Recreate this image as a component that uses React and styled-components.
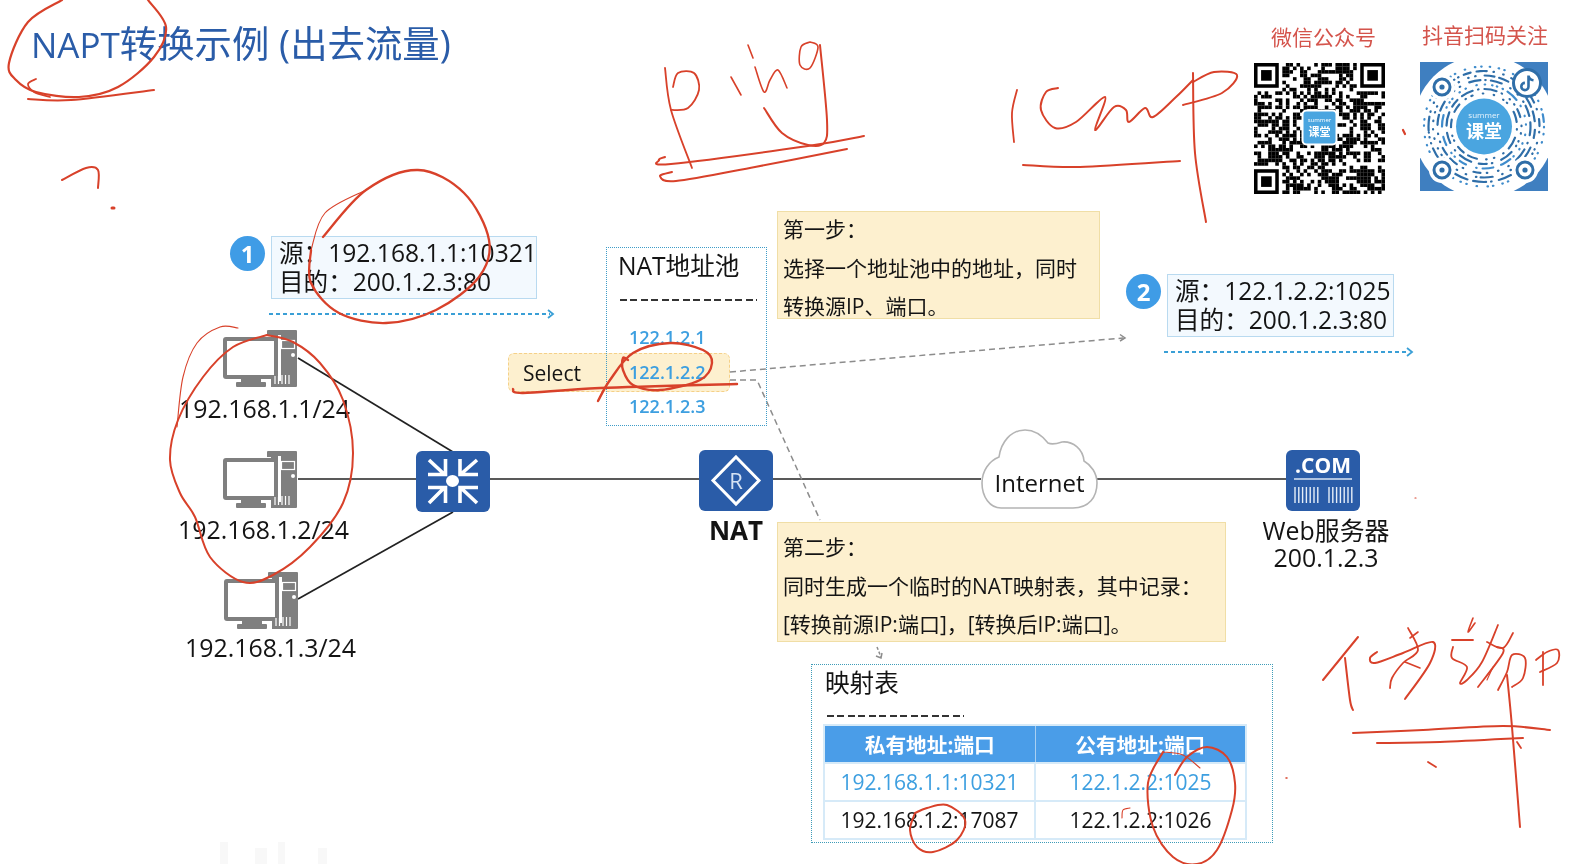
import React from 'react';
import styled, { createGlobalStyle, css } from 'styled-components';

const blue = '#2a5ca8';
const sky = '#3d9fe0';
const paper = '#fdf0cf';
const ink = '#141414';
const fontStack = '"Open Sans", "Noto Sans CJK SC", sans-serif';

const GlobalStyle = createGlobalStyle`
  html, body {
    margin: 0;
    background: #fff;
    overflow: hidden;
  }
`;

// nodes on the slide sit where the diagram puts them
const at = css`
  position: absolute;
  left: ${(p) => p.$x}px;
  top: ${(p) => p.$y}px;
`;

const Slide = styled.div`
  position: relative;
  width: 1574px;
  height: 864px;
  overflow: hidden;
  background: #fff;
  color: ${ink};
  font-family: ${fontStack};
  filter: blur(0.35px);
`;

const Title = styled.h1`
  ${at}
  margin: 0;
  font-size: 37.4px;
  font-weight: 400;
  line-height: 48px;
  color: ${blue};
  white-space: nowrap;
`;

const TitleLatin = styled.span`
  font-size: 35px;
`;

const CodeBlock = styled.figure`
  ${at}
  margin: 0;
  width: ${(p) => p.$w}px;
  display: flex;
  flex-direction: column;
  align-items: center;
  gap: ${(p) => p.$gap}px;
`;

const CodeCaption = styled.figcaption`
  padding-left: ${(p) => p.$inset}px;
  font-size: 21px;
  line-height: 28px;
  color: #d4544c;
  white-space: nowrap;
`;

const Flow = styled.div`
  ${at}
  display: flex;
  align-items: flex-start;
  gap: 6px;
`;

const Badge = styled.span`
  flex: none;
  width: 35px;
  height: 35px;
  border-radius: 50%;
  background: #3f9ce6;
  color: #fff;
  font-size: 24px;
  font-weight: 700;
  line-height: 35px;
  text-align: center;
`;

const AddressBox = styled.div`
  box-sizing: border-box;
  width: ${(p) => p.$w}px;
  height: 63px;
  padding: 1px 0 0 7px;
  background: #f3f9fe;
  border: 1px solid #b9daf0;
  font-size: 24.6px;
  line-height: 29px;
  white-space: nowrap;
`;

const Host = styled.div`
  ${at}
  display: flex;
  flex-direction: column;
  gap: ${(p) => p.$gap}px;
`;

const HostIcon = styled.svg`
  display: block;
  width: 74px;
  height: 57px;
  margin-left: ${(p) => p.$inset}px;
`;

const NodeLabel = styled.div`
  font-size: 24.9px;
  line-height: 30px;
  white-space: nowrap;
`;

const Device = styled.svg`
  ${at}
  width: 74px;
  height: 61px;
`;

const NatLabel = styled.div`
  ${at}
  width: 74px;
  font-size: 26px;
  font-weight: 700;
  line-height: 30px;
  text-align: center;
`;

const Cloud = styled.div`
  ${at}
  width: 117px;
  height: 80px;
  display: flex;
  align-items: flex-end;
  justify-content: center;
`;

const CloudShape = styled.svg`
  position: absolute;
  inset: 0;
  width: 117px;
  height: 80px;
`;

const CloudLabel = styled.span`
  position: relative;
  font-size: 24px;
  line-height: 30px;
  margin-bottom: 11px;
`;

const Server = styled.div`
  ${at}
  width: 160px;
  display: flex;
  flex-direction: column;
  align-items: center;
  font-size: 24.9px;
  line-height: 27px;
`;

const ServerIcon = styled.svg`
  display: block;
  margin: 0 0 6px -7px;
`;

const PoolBox = styled.div`
  ${at}
  box-sizing: border-box;
  width: 161px;
  height: 179px;
  padding: 3px 11px 0;
  border: 1px dotted #3f9cc8;
`;

const BoxHeading = styled.div`
  font-size: 24.6px;
  line-height: 30px;
  white-space: nowrap;
`;

const DashRule = styled.div`
  width: 137px;
  height: 2px;
  margin-top: ${(p) => p.$top}px;
  margin-left: ${(p) => p.$left}px;
  background: repeating-linear-gradient(90deg, #333 0 7px, transparent 7px 10.5px);
`;

const PoolList = styled.ul`
  list-style: none;
  margin: 24px 0 0 11px;
  padding: 0;
  display: flex;
  flex-direction: column;
  gap: 9.5px;
`;

const PoolItem = styled.li`
  font-size: 18px;
  font-weight: 600;
  line-height: 25px;
  color: ${sky};
`;

const SelectBox = styled.div`
  ${at}
  box-sizing: border-box;
  width: 222px;
  height: 39px;
  padding-left: 14px;
  background: ${paper};
  border: 1.5px dashed #f5d088;
  border-radius: 6px;
  font-size: 21px;
  line-height: 38px;
`;

const StepNote = styled.div`
  ${at}
  box-sizing: border-box;
  width: ${(p) => p.$w}px;
  height: ${(p) => p.$h}px;
  padding-left: 5px;
  background: ${paper};
  border: 1px solid #f0dea6;
  font-size: 21px;
  line-height: 38.5px;
  white-space: nowrap;
`;

const StepLines = styled.div`
  margin-top: ${(p) => p.$top}px;
`;

const MapBox = styled.div`
  ${at}
  box-sizing: border-box;
  width: 462px;
  height: 179px;
  padding: 3px 0 0 11px;
  border: 1px dotted #3f9cb8;
`;

const MapHeading = styled(BoxHeading)`
  padding-left: 2px;
`;

const MapTable = styled.table`
  border-collapse: collapse;
  table-layout: fixed;
  width: 424px;
  margin-top: 7px;
  border: 2px solid #d6eaf8;
`;

const HeadCell = styled.th`
  height: 36px;
  padding: 0;
  background: #4a9de8;
  border-right: 1px solid #a9d0f2;
  color: #fff;
  font-size: 20.7px;
  font-weight: 700;

  &:last-child {
    border-right: 0;
  }
`;

const Cell = styled.td`
  height: 36px;
  padding: 0;
  border: 2px solid #d6eaf8;
  color: ${(p) => (p.$live ? sky : ink)};
  font-size: 21px;
  text-align: center;
`;

const Overlay = styled.svg`
  position: absolute;
  inset: 0;
  width: 1574px;
  height: 864px;
  pointer-events: none;
`;

/* little seeded generator so both codes stay the same on every render */
function seeded(seed) {
  let s = seed;
  return () => {
    s = (s * 1664525 + 1013904223) % 4294967296;
    return s / 4294967296;
  };
}

const QR_SIZE = 37;

function inFinder(r, c) {
  const near = (v) => v < 8;
  const far = (v) => v >= QR_SIZE - 8;
  return (near(r) && near(c)) || (near(r) && far(c)) || (far(r) && near(c));
}

function qrModules() {
  const rnd = seeded(41);
  const cells = [];
  for (let r = 0; r < QR_SIZE; r++) {
    for (let c = 0; c < QR_SIZE; c++) {
      if (!inFinder(r, c) && rnd() > 0.47) cells.push([c, r]);
    }
  }
  return cells;
}

function Finder({ x, y }) {
  return (
    <g>
      <rect x={x + 0.5} y={y + 0.5} width="6" height="6" fill="none" stroke="#000" strokeWidth="1" />
      <rect x={x + 2} y={y + 2} width="3" height="3" fill="#000" />
    </g>
  );
}

function WechatCode() {
  return (
    <svg width="131" height="131" viewBox={`0 0 ${QR_SIZE} ${QR_SIZE}`}>
      {qrModules().map(([c, r]) => (
        <rect key={`${c}-${r}`} x={c} y={r} width="1.02" height="1.02" fill="#000" />
      ))}
      <Finder x={0} y={0} />
      <Finder x={QR_SIZE - 7} y={0} />
      <Finder x={0} y={QR_SIZE - 7} />
      <g transform="translate(18.5 18.2) scale(0.2824)">
        <rect x="-17" y="-17" width="34" height="34" rx="4" fill="#4aa5e0" stroke="#fff" strokeWidth="2" />
        <text x="0" y="-5" textAnchor="middle" fontSize="6" fill="#fff" fontFamily={fontStack}>summer</text>
        <text x="0" y="9" textAnchor="middle" fontSize="11" fontWeight="700" fill="#fff" fontFamily={fontStack}>课堂</text>
      </g>
    </svg>
  );
}

function Locator({ x, y }) {
  return (
    <g>
      <circle cx={x} cy={y} r="13" fill="#fff" />
      <circle cx={x} cy={y} r="8" fill="none" stroke="#2f6ea8" strokeWidth="3" />
      <circle cx={x} cy={y} r="2.6" fill="#2f6ea8" />
    </g>
  );
}

function DouyinCode() {
  const rnd = seeded(7);
  const rings = [33, 37.5, 42, 46.5, 51, 55.5, 60];
  return (
    <svg width="128" height="129" viewBox="0 0 128 129">
      <rect width="128" height="129" fill="#3f7fc0" />
      <circle cx="64" cy="64.5" r="71" fill="#fff" />
      {rings.map((r) => {
        const dashes = [];
        for (let i = 0; i < 26; i++) dashes.push(rnd() > 0.72 ? 7 + rnd() * 7 : 0.5, 4 + rnd() * 7);
        return (
          <circle
            key={r}
            cx="64"
            cy="64.5"
            r={r}
            fill="none"
            stroke={r % 2 ? '#2f6ea8' : '#3f8ccc'}
            strokeWidth="2.2"
            strokeLinecap="round"
            strokeDasharray={dashes.join(' ')}
            transform={`rotate(${rnd() * 360} 64 64.5)`}
          />
        );
      })}
      <circle cx="64" cy="64.5" r="28" fill="#4aa5e0" />
      <text x="64" y="56" textAnchor="middle" fontSize="8" fontWeight="500" fill="#e8f4fc" fontFamily={fontStack}>summer</text>
      <text x="64" y="76" textAnchor="middle" fontSize="18" fontWeight="700" fill="#fff" fontFamily={fontStack}>课堂</text>
      <Locator x={22} y={25} />
      <Locator x={22} y={108} />
      <Locator x={105} y={108} />
      <circle cx="107" cy="21" r="13.5" fill="#fff" stroke="#2f6ea8" strokeWidth="3" />
      <path d="M108.5 13.5v11a3.6 3.6 0 1 1-3.6-3.6M108.5 14c.6 2.6 2.4 4 5 4.3" fill="none" stroke="#2f6ea8" strokeWidth="2.6" />
    </svg>
  );
}

function Computer({ inset }) {
  return (
    <HostIcon $inset={inset} viewBox="0 0 74 57">
      <path d="M44 1a1 1 0 0 1 1-1h28a1 1 0 0 1 1 1v55a1 1 0 0 1-1 1H48V6h-4z" fill="#7f7f7f" />
      <rect x="55" y="5" width="3" height="46" fill="#fff" />
      <rect x="0" y="7" width="55" height="42" rx="3" fill="#7f7f7f" />
      <rect x="4" y="11" width="47" height="34" fill="#fff" />
      <rect x="13" y="52" width="30" height="5" rx="1" fill="#7f7f7f" />
      <rect x="18" y="49" width="20" height="3" fill="#7f7f7f" />
      <rect x="58.5" y="10.5" width="13" height="8" fill="none" stroke="#fff" strokeWidth="1.2" />
      <circle cx="70" cy="25" r="2" fill="#fff" />
      <path d="M52 46v8M55.5 46v8M59 45v9M62.5 45v9M66 45v9" stroke="#fff" strokeWidth="1.2" />
    </HostIcon>
  );
}

function SwitchDevice({ x, y }) {
  return (
    <Device $x={x} $y={y} viewBox="0 0 74 61">
      <rect width="74" height="61" rx="6" fill={blue} />
      <ellipse cx="36.5" cy="30" rx="6.5" ry="6" fill="#fff" />
      <g fill="none" stroke="#fff" strokeWidth="3.6">
        <path d="M13 9l15 14M12 23.5h17.5V8" />
        <path d="M61 9L45 23M62 23.5H44V8" />
        <path d="M13 52l15-15M12 36.5h17.5V52" />
        <path d="M61 52L45 37M62 36.5H44V52" />
      </g>
    </Device>
  );
}

function RouterDevice({ x, y }) {
  return (
    <Device $x={x} $y={y} viewBox="0 0 74 61">
      <rect width="74" height="61" rx="6" fill={blue} />
      <path d="M37 7L60 30.5 37 54 14 30.5z" fill="none" stroke="#fff" strokeWidth="3" />
      <text x="37" y="38.5" textAnchor="middle" fontSize="22" fill="#d5e2f3" fontFamily={fontStack}>R</text>
    </Device>
  );
}

function ComDevice() {
  const bars = [];
  for (let i = 0; i < 7; i++) bars.push(9 + i * 3.8, 43 + i * 3.8);
  return (
    <ServerIcon width="74" height="61" viewBox="0 0 74 61">
      <rect width="74" height="61" rx="6" fill={blue} />
      <text x="37" y="23" textAnchor="middle" fontSize="21" fontWeight="700" fill="#fff" fontFamily={fontStack}>.COM</text>
      <path d="M8 29h58" stroke="#dbe6f5" strokeWidth="1.4" />
      {bars.map((b) => (
        <path key={b} d={`M${b} 37v16`} stroke="#e6eef8" strokeWidth="1.4" />
      ))}
    </ServerIcon>
  );
}

function Wires() {
  return (
    <Overlay viewBox="0 0 1574 864">
      <g stroke="#222" strokeWidth="1.7" fill="none">
        <path d="M298 358L453 452" />
        <path d="M298 479H417" />
        <path d="M298 599L453 512" />
        <path d="M490 479H699" />
        <path d="M773 479H981" />
        <path d="M1097 479H1286" />
      </g>
      <g fill="none" stroke="#3a9fd6" strokeWidth="1.8">
        <path d="M269 314H550" strokeDasharray="4 3" />
        <path d="M548 310l5 4-5 4" />
        <path d="M1164 352H1409" strokeDasharray="4 3" />
        <path d="M1407 348l5 4-5 4" />
      </g>
      <g fill="none" stroke="#8c8c8c" strokeWidth="1.5">
        <path d="M730 372L1123 338" strokeDasharray="6 4" />
        <path d="M1120 334.5l5 3.5-5 3" />
        <path d="M730 380H757L820 520" strokeDasharray="6 4" />
        <path d="M877 647L881 657" strokeDasharray="3 2" />
        <path d="M876 656l5 2 1-5" />
      </g>
    </Overlay>
  );
}

// pen marks of the presenter, as point lists in slide coordinates
const penMarks = [
  { w: 2.2, pts: [[62, 0], [28, 22], [9, 63], [16, 80], [36, 92], [79, 97], [118, 87], [154, 57], [166, 27], [148, 0]] },
  { w: 1.8, pts: [[36, 79], [28, 84], [34, 92], [50, 97]] },
  { w: 2, pts: [[28, 99], [71, 100], [154, 90]] },
  { w: 2, pts: [[62, 180], [86, 168], [98, 170], [98, 188]] },
  { w: 3, pts: [[112, 208], [114, 208]] },
  { w: 2.3, pts: [[323, 237], [366, 190], [418, 170], [464, 193], [489, 240], [479, 277], [436, 310], [386, 323], [339, 313], [311, 283], [311, 250]] },
  { w: 1.1, pts: [[311, 250], [325, 213], [366, 190]] },
  { w: 1.1, pts: [[238, 328], [220, 327], [197, 343], [183, 377], [177, 427]] },
  { w: 2, pts: [[267, 335], [233, 347], [203, 377], [178, 420], [170, 460], [180, 493], [195, 517], [210, 557], [243, 582], [273, 575], [310, 547], [343, 503], [353, 453], [343, 400], [320, 363], [293, 342], [267, 335]] },
  { w: 2.4, pts: [[513, 389], [523, 393], [600, 388], [737, 384]] },
  { w: 2.4, pts: [[598, 401], [610, 380], [633, 353], [670, 343], [703, 350], [712, 363], [700, 380], [660, 390], [633, 385], [623, 370], [623, 358], [628, 360]] },
  { w: 2, pts: [[915, 813], [910, 830], [917, 847], [933, 852], [957, 840], [965, 820], [947, 805], [927, 808], [915, 813]] },
  { w: 1.1, pts: [[1200, 768], [1183, 755], [1163, 752]] },
  { w: 2, pts: [[1163, 752], [1148, 783], [1153, 827], [1173, 857], [1197, 864], [1217, 850], [1232, 810], [1235, 783], [1227, 757], [1207, 747], [1187, 757], [1175, 775]] },
  { w: 1.1, pts: [[1122, 818], [1123, 810], [1130, 808]] },
  { w: 1.8, pts: [[665, 68], [671, 110], [692, 168]] },
  { w: 1.8, pts: [[673, 87], [678, 73], [694, 73], [699, 90], [688, 108], [671, 110]] },
  { w: 1.6, pts: [[748, 45], [753, 58]] },
  { w: 1.6, pts: [[731, 77], [741, 95]] },
  { w: 1.6, pts: [[755, 67], [764, 92], [770, 80], [778, 70], [787, 88]] },
  { w: 1.6, pts: [[810, 42], [801, 47], [800, 65], [810, 68], [818, 47], [810, 42]] },
  { w: 2, pts: [[820, 45], [827, 120], [824, 143], [808, 145], [782, 133], [764, 108]] },
  { w: 2, pts: [[665, 157], [659, 160], [671, 164], [808, 146], [864, 136]] },
  { w: 2, pts: [[672, 172], [660, 176], [676, 181], [755, 167], [847, 149]] },
  { w: 1.8, pts: [[1017, 90], [1012, 113], [1014, 142]] },
  { w: 2, pts: [[1058, 88], [1046, 92], [1041, 110], [1055, 128], [1076, 122], [1105, 97], [1095, 130], [1114, 107], [1126, 110], [1129, 122], [1145, 108], [1153, 117], [1176, 97], [1193, 80]] },
  { w: 2, pts: [[1193, 73], [1195, 153], [1206, 222]] },
  { w: 2, pts: [[1193, 82], [1214, 72], [1237, 75], [1222, 93], [1183, 105]] },
  { w: 2, pts: [[1023, 165], [1080, 167], [1180, 161]] },
  { w: 2.2, pts: [[1403, 130], [1405, 134]] },
  { w: 2, pts: [[1358, 637], [1323, 680]] },
  { w: 2, pts: [[1345, 658], [1350, 700], [1353, 710]] },
  { w: 2, pts: [[1377, 652], [1370, 658], [1375, 663], [1403, 653], [1433, 642], [1430, 663], [1405, 699]] },
  { w: 1.8, pts: [[1408, 628], [1418, 650], [1403, 663], [1392, 678], [1390, 688]] },
  { w: 1.6, pts: [[1405, 662], [1420, 668]] },
  { w: 1.6, pts: [[1418, 632], [1410, 638]] },
  { w: 1.6, pts: [[1473, 618], [1468, 632], [1475, 623]] },
  { w: 1.8, pts: [[1452, 640], [1473, 640]] },
  { w: 1.8, pts: [[1453, 647], [1452, 658], [1467, 667], [1460, 683], [1467, 680], [1482, 662], [1498, 625]] },
  { w: 1.8, pts: [[1487, 642], [1503, 648], [1513, 633]] },
  { w: 1.8, pts: [[1497, 647], [1503, 653], [1478, 687]] },
  { w: 1.1, pts: [[1493, 667], [1487, 680]] },
  { w: 1.8, pts: [[1498, 690], [1507, 672], [1512, 655], [1525, 658], [1523, 678], [1512, 687]] },
  { w: 1.8, pts: [[1536, 660], [1547, 652], [1558, 650], [1557, 663], [1540, 672]] },
  { w: 1.8, pts: [[1543, 652], [1543, 685]] },
  { w: 2, pts: [[1507, 675], [1512, 727], [1520, 827]] },
  { w: 2, pts: [[1353, 733], [1423, 730], [1503, 726], [1550, 730]] },
  { w: 2, pts: [[1377, 743], [1440, 742], [1523, 738]] },
  { w: 1.8, pts: [[1517, 742], [1521, 748]] },
  { w: 1.8, pts: [[1428, 762], [1436, 767]] },
  { w: 1.5, pts: [[1286, 778], [1287, 778]] },
  { w: 1.2, pts: [[1415, 498], [1416, 498]] },
];

// Catmull-Rom through the points, the pen lines are never straight
function smooth(pts) {
  if (pts.length < 3) return `M${pts.map((p) => p.join(' ')).join('L')}`;
  let d = `M${pts[0][0]} ${pts[0][1]}`;
  for (let i = 0; i < pts.length - 1; i++) {
    const p0 = pts[i - 1] || pts[i];
    const p1 = pts[i];
    const p2 = pts[i + 1];
    const p3 = pts[i + 2] || p2;
    const c1 = [p1[0] + (p2[0] - p0[0]) / 6, p1[1] + (p2[1] - p0[1]) / 6];
    const c2 = [p2[0] - (p3[0] - p1[0]) / 6, p2[1] - (p3[1] - p1[1]) / 6];
    d += `C${c1[0]} ${c1[1]} ${c2[0]} ${c2[1]} ${p2[0]} ${p2[1]}`;
  }
  return d;
}

function PenLayer() {
  return (
    <Overlay viewBox="0 0 1574 864">
      {/* faint leftovers of the video at the bottom edge */}
      <g fill="#f8f8f8">
        <rect x="220" y="842" width="8" height="22" />
        <rect x="255" y="848" width="12" height="16" />
        <rect x="278" y="842" width="7" height="22" />
        <rect x="318" y="848" width="9" height="16" />
      </g>
      <g fill="none" stroke="#d8412a" strokeLinecap="round" strokeLinejoin="round">
        {penMarks.map((m, i) => (
          <path key={i} d={smooth(m.pts)} strokeWidth={m.w} />
        ))}
      </g>
    </Overlay>
  );
}

const hosts = [
  { y: 330, gap: 6, inset: 44, x: 179, ip: '192.168.1.1/24' },
  { y: 451, gap: 6, inset: 45, x: 178, ip: '192.168.1.2/24' },
  { y: 572, gap: 3, inset: 39, x: 185, ip: '192.168.1.3/24' },
];

const mapRows = [
  { priv: '192.168.1.1:10321', pub: '122.1.2.2:1025', live: true },
  { priv: '192.168.1.2:17087', pub: '122.1.2.2:1026', live: false },
];

function App() {
  return (
    <Slide>
      <GlobalStyle />
      <Wires />
      <Title $x={31} $y={20}>
        <TitleLatin>NAPT</TitleLatin>转换示例 (出去流量)
      </Title>

      <CodeBlock $x={1254} $y={23} $w={131} $gap={12}>
        <CodeCaption $inset={8}>微信公众号</CodeCaption>
        <WechatCode />
      </CodeBlock>
      <CodeBlock $x={1420} $y={21} $w={128} $gap={13}>
        <CodeCaption $inset={2}>抖音扫码关注</CodeCaption>
        <DouyinCode />
      </CodeBlock>

      <Flow $x={230} $y={236}>
        <Badge>1</Badge>
        <AddressBox $w={266}>
          源：192.168.1.1:10321
          <br />
          目的：200.1.2.3:80
        </AddressBox>
      </Flow>
      <Flow $x={1126} $y={274}>
        <Badge>2</Badge>
        <AddressBox $w={227}>
          源：122.1.2.2:1025
          <br />
          目的：200.1.2.3:80
        </AddressBox>
      </Flow>

      {hosts.map((h) => (
        <Host key={h.ip} $x={h.x} $y={h.y} $gap={h.gap}>
          <Computer inset={h.inset} />
          <NodeLabel>{h.ip}</NodeLabel>
        </Host>
      ))}

      <SwitchDevice x={416} y={451} />
      <RouterDevice x={699} y={450} />
      <NatLabel $x={699} $y={515}>NAT</NatLabel>

      <Cloud $x={981} $y={429}>
        <CloudShape viewBox="0 0 117 80">
          <path
            d="M20 79H92C108 79 116 68 116 54C116 44 110 36 103 32C102 20 92 12 81 13C78 14 71 16 67 14C60 5 52 1 44 1C30 1 20 13 18 28C8 32 1 42 1 54C1 68 9 79 20 79Z"
            fill="#fff"
            stroke="#b4b4b4"
            strokeWidth="1.6"
          />
        </CloudShape>
        <CloudLabel>Internet</CloudLabel>
      </Cloud>

      <Server $x={1246} $y={450}>
        <ComDevice />
        <span>Web服务器</span>
        <span>200.1.2.3</span>
      </Server>

      <SelectBox $x={508} $y={353}>Select</SelectBox>
      <PoolBox $x={606} $y={247}>
        <BoxHeading>NAT地址池</BoxHeading>
        <DashRule $left={2} $top={18} />
        <PoolList>
          <PoolItem>122.1.2.1</PoolItem>
          <PoolItem>122.1.2.2</PoolItem>
          <PoolItem>122.1.2.3</PoolItem>
        </PoolList>
      </PoolBox>

      <StepNote $x={777} $y={211} $w={323} $h={108}>
        <StepLines $top={-2}>
          第一步：
          <br />
          选择一个地址池中的地址，同时
          <br />
          转换源IP、端口。
        </StepLines>
      </StepNote>
      <StepNote $x={777} $y={522} $w={449} $h={120}>
        <StepLines $top={5}>
          第二步：
          <br />
          同时生成一个临时的NAT映射表，其中记录：
          <br />
          [转换前源IP:端口]，[转换后IP:端口]。
        </StepLines>
      </StepNote>

      <MapBox $x={811} $y={664}>
        <MapHeading>映射表</MapHeading>
        <DashRule $left={4} $top={17} />
        <MapTable>
          <thead>
            <tr>
              <HeadCell>私有地址:端口</HeadCell>
              <HeadCell>公有地址:端口</HeadCell>
            </tr>
          </thead>
          <tbody>
            {mapRows.map((row) => (
              <tr key={row.priv}>
                <Cell $live={row.live}>{row.priv}</Cell>
                <Cell $live={row.live}>{row.pub}</Cell>
              </tr>
            ))}
          </tbody>
        </MapTable>
      </MapBox>

      <PenLayer />
    </Slide>
  );
}

export default App;
